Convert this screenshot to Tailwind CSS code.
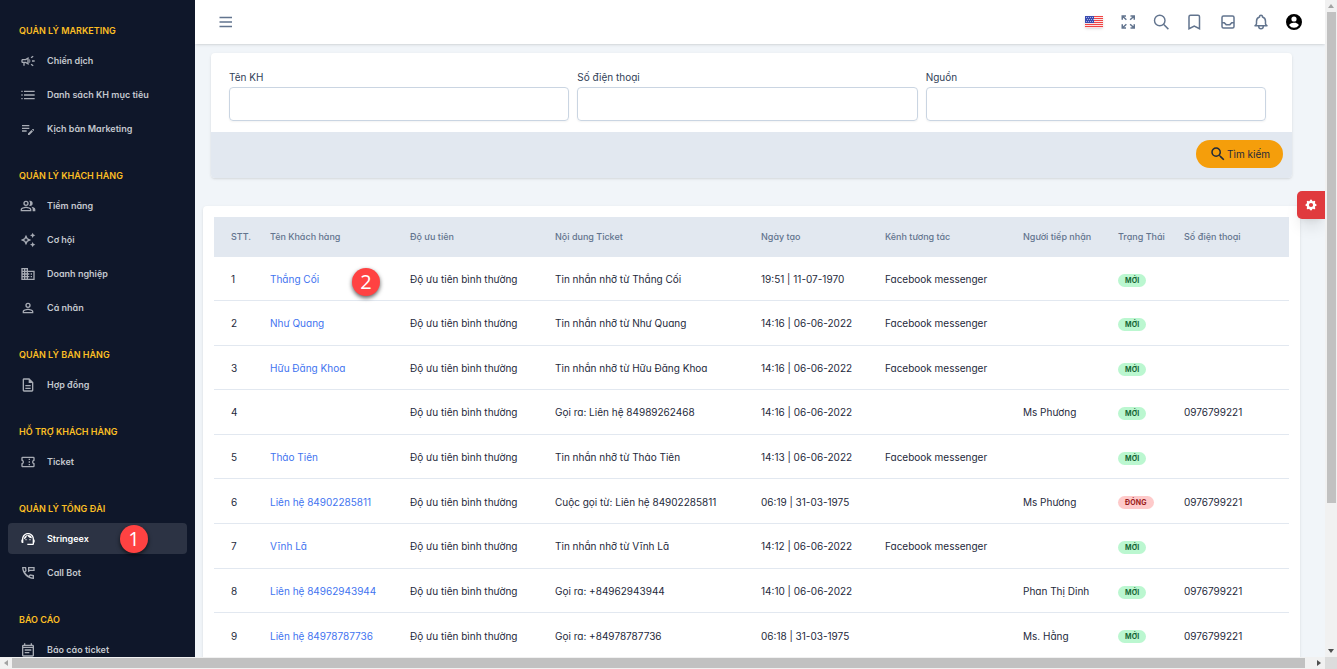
<!DOCTYPE html>
<html lang="vi">
<head>
<meta charset="utf-8">
<title>Stringeex</title>
<script src="https://cdn.jsdelivr.net/npm/@tailwindcss/browser@4"></script>
</head>
<body class="h-screen overflow-hidden bg-[#f1f5f9] font-['Inter','Noto_Sans',sans-serif] [font-feature-settings:'cv11'] text-[10px] leading-4 text-[#1e293b]">
<svg class="hidden">
  <symbol id="search" viewBox="0 0 24 24"><path fill="currentColor" d="M15.5 14h-.79l-.28-.27A6.47 6.47 0 0 0 16 9.5 6.5 6.5 0 1 0 9.5 16c1.61 0 3.09-.59 4.23-1.57l.27.28v.79l5 4.99L20.49 19l-4.99-5zm-6 0C7.01 14 5 11.99 5 9.5S7.01 5 9.5 5 14 7.01 14 9.5 11.99 14 9.5 14z"/></symbol>
</svg>
<div class="flex h-full flex-col">
  <div class="flex min-h-0 flex-1">
    <aside class="relative w-[195px] shrink-0 overflow-hidden bg-[#0f172a] pt-[23px] font-semibold text-[#c3c7ce]">
      <nav id="nav" class="flex flex-col gap-6"></nav>
      <span class="absolute left-[120px] top-[525px] flex size-7 items-center justify-center rounded-full bg-[#ff4242] font-['Open_Sans',sans-serif] text-xl font-medium text-white shadow-[0_2px_4px_#000000a0]">1</span>
    </aside>

    <main class="relative flex min-w-0 flex-1 flex-col overflow-hidden">
      <header class="z-10 flex h-11 shrink-0 items-center bg-white pl-6 pr-[22px] text-slate-500 shadow">
        <button aria-label="Menu"><svg class="size-[14px]" viewBox="0 0 14 14" fill="none" stroke="currentColor" stroke-width="1.4"><path d="M.5 2.500h12.500M.5 7h12.500M.5 11.500h12.500"/></svg></button>
        <div class="ml-auto flex items-center gap-[15px]">
          <button aria-label="English" class="flex h-[18px] w-5 items-center"><svg class="h-3 w-[18px] shadow" viewBox="0 0 18 12"><path fill="#fbe4e4" d="M0 0h18v12H0z"/><path stroke="#f04444" d="M0 .5h18M0 2.500h18M0 4.500h18M0 6.500h18M0 8.500h18M0 10.500h18"/><path fill="#3b4cb0" d="M0 0h9v7H0z"/><path stroke="#c3c9ee" stroke-width=".8" stroke-dasharray="1 1" d="M1 1.500h7M2 3.500h7M1 5.500h7"/></svg></button>
          <button aria-label="Toàn màn hình"><svg class="size-[18px]" viewBox="0 0 24 24" fill="none" stroke="currentColor" stroke-width="2"><path d="M3 9V4h5M3 4l5.500 5M14 4h5v5M19 4l-5.500 5M3 15v5h5M3 20l5.500-5M19 15v5h-5M19 20l-5.500-5"/></svg></button>
          <button aria-label="Tìm"><svg class="size-[18px]" viewBox="0 0 24 24" fill="none" stroke="currentColor" stroke-width="1.9"><circle cx="9" cy="10" r="7"/><path d="m14 15 6.500 6.500"/></svg></button>
          <button aria-label="Đánh dấu"><svg class="size-[18px]" viewBox="0 0 24 24" fill="none" stroke="currentColor" stroke-width="2"><path d="M4 5a2 2 0 0 1 2-2h10a2 2 0 0 1 2 2v16l-7-3.500L4 21V5z"/></svg></button>
          <button aria-label="Hộp thư"><svg class="size-[18px]" viewBox="0 0 24 24" fill="none" stroke="currentColor" stroke-width="2"><rect x="4" y="4" width="16" height="16" rx="2"/><path d="M4 13h3l2.500 2.500h5L17 13h3"/></svg></button>
          <button aria-label="Thông báo"><svg class="size-[18px]" viewBox="0 0 24 24" fill="none" stroke="currentColor" stroke-width="2" stroke-linejoin="round"><path d="M15 17h5l-1.400-1.400A2 2 0 0 1 18 14.200V11a6 6 0 0 0-4-5.660V5a2 2 0 1 0-4 0v.34A6 6 0 0 0 6 11v3.160c0 .54-.2 1.050-.6 1.440L4 17h5m6 0v1a3 3 0 1 1-6 0v-1m6 0H9"/></svg></button>
          <button aria-label="Tài khoản" class="px-px text-black"><svg class="size-4" viewBox="2 2 20 20"><path fill="currentColor" d="M12 2a10 10 0 1 0 0 20 10 10 0 0 0 0-20zm0 3a3 3 0 1 1 0 6.500A3 3 0 0 1 12 5zm0 14.200a7.200 7.200 0 0 1-6-3.220c.03-1.990 4-3.080 6-3.080s5.970 1.090 6 3.080a7.200 7.200 0 0 1-6 3.220z"/></svg></button>
        </div>
      </header>

      <div class="flex flex-col gap-7 pl-2 pr-[25px] pt-[9px]">
        <form class="mx-2 overflow-hidden rounded bg-white shadow">
          <div class="grid grid-cols-3 gap-2 pb-[11px] pl-[18px] pr-[26px] pt-4">
            <div class="flex flex-col gap-[2px] text-slate-700"><label for="name">Tên KH</label><input id="name" class="h-[34px] rounded border border-slate-300 px-2 shadow-xs"></div>
            <div class="flex flex-col gap-[2px] text-slate-700"><label for="phone">Số điện thoại</label><input id="phone" class="h-[34px] rounded border border-slate-300 px-2 shadow-xs"></div>
            <div class="flex flex-col gap-[2px] text-slate-700"><label for="source">Nguồn</label><input id="source" class="h-[34px] rounded border border-slate-300 px-2 shadow-xs"></div>
          </div>
          <div class="flex h-[46px] items-center justify-end bg-[#e2e8f0] pb-[2px] pr-[9px]">
            <button type="button" class="flex h-7 items-center rounded-full bg-[#f59e0b] px-[13px] text-[#1e293b]"><svg class="size-[18px]"><use href="#search"/></svg>Tìm kiếm</button>
          </div>
        </form>

        <section class="rounded bg-white px-[11px] pb-4 pt-[11px] shadow">
          <table class="h-[441px] w-full table-fixed border-collapse text-left">
            <colgroup><col class="w-[56px]"><col class="w-[140px]"><col class="w-[145px]"><col class="w-[206px]"><col class="w-[124px]"><col class="w-[138px]"><col class="w-[95px]"><col class="w-[66px]"><col></colgroup>
            <thead>
              <tr class="h-10 bg-[#e2e8f0] text-[9px] text-slate-500 [&>th]:font-medium">
                <th class="pl-[17px]">STT.</th><th>Tên Khách hàng</th><th>Độ ưu tiên</th><th>Nội dung Ticket</th><th>Ngày tạo</th><th>Kênh tương tác</th><th>Người tiếp nhận</th><th>Trạng Thái</th><th>Số điện thoại</th>
              </tr>
            </thead>
            <tbody id="rows" class="[&_td]:whitespace-nowrap [&_td]:pt-px"></tbody>
          </table>
        </section>
      </div>

      <span class="absolute left-[157px] top-[268px] flex size-7 items-center justify-center rounded-full bg-[#ff4242] font-['Open_Sans',sans-serif] text-xl font-medium text-white shadow-[0_2px_4px_#000000a0]">2</span>
      <button aria-label="Cài đặt" class="absolute right-0 top-[191px] z-10 flex h-7 w-7 items-center justify-center rounded-l-[5px] bg-[#e03a3e] text-white shadow-lg"><svg class="size-[14px]" viewBox="0 0 20 20"><path fill="currentColor" fill-rule="evenodd" d="M11.490 3.170c-.38-1.560-2.600-1.560-2.980 0a1.530 1.530 0 0 1-2.290.95c-1.370-.84-2.940.73-2.100 2.100.54.890.06 2.040-.95 2.290-1.560.38-1.560 2.600 0 2.980a1.530 1.530 0 0 1 .95 2.290c-.84 1.370.73 2.940 2.100 2.100.89-.54 2.040-.06 2.290.95.38 1.560 2.600 1.560 2.980 0a1.530 1.530 0 0 1 2.290-.95c1.370.84 2.940-.73 2.100-2.100a1.530 1.530 0 0 1 .95-2.290c1.560-.38 1.560-2.600 0-2.980a1.530 1.530 0 0 1-.95-2.290c.84-1.370-.73-2.940-2.100-2.100a1.530 1.530 0 0 1-2.290-.95zM10 13a3 3 0 1 0 0-6 3 3 0 0 0 0 6z"/></svg></button>
    </main>

    <div class="flex w-3 shrink-0 flex-col items-center bg-[#f1f1f1]">
      <span class="flex h-3 items-center"><svg class="h-1 w-[6px]" viewBox="0 0 6 4"><path fill="#a3a3a3" d="M0 4h6L3 0z"/></svg></span>
      <span class="h-[491px] w-[9px] bg-[#c1c1c1]"></span>
      <span class="mt-auto flex h-3 items-center"><svg class="h-1 w-[6px]" viewBox="0 0 6 4"><path fill="#505050" d="M0 0h6L3 4z"/></svg></span>
    </div>
  </div>
  <div class="flex h-3 shrink-0 items-center bg-[#f1f1f1]">
    <span class="flex w-3 justify-center"><svg class="h-[6px] w-1" viewBox="0 0 4 6"><path fill="#a3a3a3" d="M4 0v6L0 3z"/></svg></span>
    <span class="h-[10px] flex-1 bg-[#c1c1c1]"></span>
    <span class="flex w-5 justify-end pr-1"><svg class="h-[6px] w-1" viewBox="0 0 4 6"><path fill="#505050" d="M0 0v6l4-3z"/></svg></span>
    <span class="h-3 w-3 bg-[#dcdcdc]"></span>
  </div>
</div>
<script>
const icons = {
  campaign: '<path d="M18 11v2h4v-2h-4zm-2 6.610c.96.71 2.210 1.650 3.200 2.390.4-.53.8-1.070 1.200-1.600-.99-.74-2.240-1.680-3.200-2.400-.4.540-.8 1.080-1.200 1.610zM20.400 5.600c-.4-.53-.8-1.070-1.200-1.600-.99.74-2.240 1.680-3.200 2.400.4.530.8 1.070 1.200 1.600.96-.72 2.210-1.650 3.200-2.400zM4 9c-1.100 0-2 .9-2 2v2c0 1.100.9 2 2 2h1v4h2v-4h1l5 3V6L8 9H4zm5.030 1.710L11 9.530v4.940l-1.970-1.180-.48-.29H4v-2h4.550l.48-.29zM15.500 12c0-1.330-.58-2.530-1.500-3.350v6.690c.92-.81 1.500-2.010 1.500-3.340z"/>',
  list: '<path d="M2 5.500h2v2H2zM2 11h2v2H2zM2 16.500h2v2H2zM6 5.500h16v2H6zM6 11h16v2H6zM6 16.500h16v2H6z"/>',
  note: '<path d="M3 10h11v2H3v-2zm0-2h11V6H3v2zm0 8h7v-2H3v2zm15.010-3.130.71-.71c.39-.39 1.020-.39 1.410 0l.71.710c.39.390.39 1.020 0 1.410l-.71.710-2.120-2.120zm-.71.710-5.300 5.300V21h2.120l5.300-5.300-2.120-2.120z"/>',
  group: '<path d="M9 12a4 4 0 1 0 0-8 4 4 0 0 0 0 8zm0-6a2 2 0 1 1 0 4 2 2 0 0 1 0-4zM9 13c-2.670 0-8 1.340-8 4v3h16v-3c0-2.660-5.330-4-8-4zm6 5H3v-.99C3.200 16.290 6.300 15 9 15s5.800 1.290 6 2v1zM15 12a4 4 0 0 0 0-8c-.47 0-.91.100-1.330.24a5.980 5.980 0 0 1 0 7.520c.42.140.86.240 1.330.24zM16.670 13.130C18.040 14.060 19 15.320 19 17v3h4v-3c0-2.180-3.580-3.470-6.330-3.870z"/>',
  spark: '<path d="m19 9 1.250-2.750L23 5l-2.750-1.250L19 1l-1.250 2.750L15 5l2.750 1.250L19 9zm0 6-1.250 2.750L15 19l2.750 1.250L19 23l1.250-2.750L23 19l-2.750-1.250L19 15zm-7.500-5.500L9 4 6.500 9.500 1 12l5.500 2.500L9 20l2.500-5.500L17 12l-5.500-2.500zm-1.510 3.490L9 15.170l-.99-2.180L5.830 12l2.180-.99L9 8.830l.99 2.180 2.180.99-2.180.99z"/>',
  building: '<path d="M12 7V3H2v18h20V7H12zM6 19H4v-2h2v2zm0-4H4v-2h2v2zm0-4H4V9h2v2zm0-4H4V5h2v2zm4 12H8v-2h2v2zm0-4H8v-2h2v2zm0-4H8V9h2v2zm0-4H8V5h2v2zm10 12h-8v-2h2v-2h-2v-2h2v-2h-2V9h8v10zm-2-8h-2v2h2v-2zm0 4h-2v2h2v-2z"/>',
  person: '<path d="M12 4a4 4 0 1 0 0 8 4 4 0 0 0 0-8zm0 6a2 2 0 1 1 0-4 2 2 0 0 1 0 4zm0 3c-2.670 0-8 1.340-8 4v3h16v-3c0-2.660-5.330-4-8-4zm6 5H6v-.99c.2-.72 3.300-2.010 6-2.010s5.800 1.290 6 2v1z"/>',
  doc: '<path d="M8 16h8v2H8zm0-4h8v2H8zm6-10H6c-1.100 0-2 .9-2 2v16c0 1.100.89 2 1.990 2H18c1.100 0 2-.9 2-2V8l-6-6zm4 18H6V4h7v5h5v11z"/>',
  ticket: '<path d="M22 10V6a2 2 0 0 0-2-2H4a2 2 0 0 0-2 2v4a2 2 0 0 1 0 4v4c0 1.100.9 2 2 2h16a2 2 0 0 0 2-2v-4a2 2 0 0 1 0-4zm-2-1.460a4 4 0 0 0 0 6.920V18H4v-2.540a4 4 0 0 0 0-6.920V6h16v2.540zM13 15h2v2h-2zm0-4h2v2h-2zm0-4h2v2h-2z"/>',
  agent: '<path d="M21 12.220C21 6.730 16.740 3 12 3c-4.690 0-9 3.650-9 9.280-.6.340-1 .98-1 1.720v2c0 1.100.9 2 2 2h1v-6.100a7 7 0 0 1 14 0V19h-8v2h8c1.100 0 2-.9 2-2v-1.220c.59-.31 1-.92 1-1.640v-2.300c0-.7-.41-1.310-1-1.620z"/><circle cx="9" cy="13" r="1"/><circle cx="15" cy="13" r="1"/><path d="M18 11.030A6.040 6.040 0 0 0 12.050 6c-3.030 0-6.290 2.510-6.030 6.450a8.070 8.070 0 0 0 4.860-5.890c1.310 2.630 4 4.440 7.120 4.470z"/>',
  call: '<path d="m15 14-2.200 2.200a15 15 0 0 1-5-5L10 9 9.200 3H3.100C2.900 12.700 11.300 21.200 21 20.900v-5.800L15 14zM5.100 5h2.300l.5 3.200-1.300 1.300A13 13 0 0 1 5.100 5zM19 18.900a14 14 0 0 1-4.500-1.500l1.300-1.300 3.200.6v2.200zM12 3v8l3-2h7V3H12zm8 4h-6V5h6v2z"/>',
  event: '<path d="M19 4h-1V2h-2v2H8V2H6v2H5a2 2 0 0 0-2 2v14c0 1.100.9 2 2 2h14c1.100 0 2-.9 2-2V6c0-1.100-.9-2-2-2zm0 16H5V9h14v11zM5 7V6h14v1H5zm2 4h10v2H7zm0 4h7v2H7z"/>'
};
const groups = [
  ['QUẢN LÝ MARKETING', [['campaign', 'Chiến dịch'], ['list', 'Danh sách KH mục tiêu'], ['note', 'Kịch bản Marketing']]],
  ['QUẢN LÝ KHÁCH HÀNG', [['group', 'Tiềm năng'], ['spark', 'Cơ hội'], ['building', 'Doanh nghiệp'], ['person', 'Cá nhân']]],
  ['QUẢN LÝ BÁN HÀNG', [['doc', 'Hợp đồng']]],
  ['HỖ TRỢ KHÁCH HÀNG', [['ticket', 'Ticket']]],
  ['QUẢN LÝ TỔNG ĐÀI', [['agent', 'Stringeex'], ['call', 'Call Bot']]],
  ['BÁO CÁO', [['event', 'Báo cáo ticket']]]
];
document.getElementById('nav').innerHTML = groups.map(([title, items]) => `
  <section><h2 class="pl-[19px] text-[9px] leading-4 font-semibold text-[#fbbf24]">${title}</h2>
  <ul class="mx-2 mt-[6px] flex flex-col gap-[3px]">${items.map(([icon, label]) => `
    <li><a href="#" class="flex h-[31px] items-center gap-[11px] rounded pl-3 text-[9px] ${label === 'Stringeex' ? 'bg-[#2c3344] text-white' : ''}"><svg class="size-4 ${label === 'Stringeex' ? '' : 'opacity-85'}" viewBox="0 0 24 24" fill="currentColor">${icons[icon]}</svg>${label}</a></li>`).join('')}
  </ul></section>`).join('');

const fb = 'Facebook messenger', tel = '0976799221';
const rows = [
  ['Thắng Cối', 'Tin nhắn nhỡ từ Thắng Cối', '19:51 | 11-07-1970', fb, '', ''],
  ['Như Quang', 'Tin nhắn nhỡ từ Như Quang', '14:16 | 06-06-2022', fb, '', ''],
  ['Hữu Đăng Khoa', 'Tin nhắn nhỡ từ Hữu Đăng Khoa', '14:16 | 06-06-2022', fb, '', ''],
  ['', 'Gọi ra: Liên hệ 84989262468', '14:16 | 06-06-2022', '', 'Ms Phương', tel],
  ['Thảo Tiên', 'Tin nhắn nhỡ từ Thảo Tiên', '14:13 | 06-06-2022', fb, '', ''],
  ['Liên hệ 84902285811', 'Cuộc gọi từ: Liên hệ 84902285811', '06:19 | 31-03-1975', '', 'Ms Phương', tel],
  ['Vĩnh Lã', 'Tin nhắn nhỡ từ Vĩnh Lã', '14:12 | 06-06-2022', fb, '', ''],
  ['Liên hệ 84962943944', 'Gọi ra: +84962943944', '14:10 | 06-06-2022', '', 'Phan Thị Dinh', tel],
  ['Liên hệ 84978787736', 'Gọi ra: +84978787736', '06:18 | 31-03-1975', '', 'Ms. Hằng', tel]
];
document.getElementById('rows').innerHTML = rows.map(([name, text, date, channel, owner, phone], i) => `
  <tr class="border-b border-[#e2e8f0]"><td class="pl-[17px]">${i + 1}</td>
  <td>${name ? `<a href="#" class="text-[#3f74f0]">${name}</a>` : ''}</td><td>Độ ưu tiên bình thường</td><td>${text}</td><td>${date}</td><td>${channel}</td><td>${owner}</td>
  <td>${i === 5 ? '<span class="inline-block rounded-full bg-[#fecaca] px-[7px] align-middle text-[7px] leading-[13px] font-bold tracking-wide text-[#991b1b]">ĐÓNG</span>' : '<span class="inline-block rounded-full bg-[#bbf7d0] px-[7px] align-middle text-[7px] leading-[13px] font-bold tracking-wide text-[#166534]">MỚI</span>'}</td>
  <td>${phone}</td></tr>`).join('');
</script>
</body>
</html>
